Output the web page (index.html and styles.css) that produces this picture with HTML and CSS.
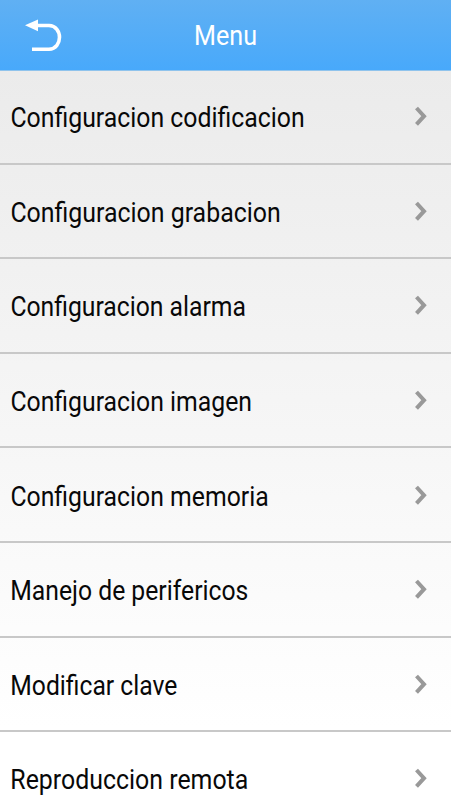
FILE: index.html
```html
<!DOCTYPE html>
<html lang="es">
<head>
<meta charset="utf-8">
<title>Menu</title>
<link rel="stylesheet" href="styles.css">
</head>
<body>
<header class="bar">
<svg class="back" width="40" height="36" viewBox="0 0 40 36"><path d="M12 8.5H25C39 9 39 31.500 25 32.200H8" fill="none" stroke="#fff" stroke-width="3.600"/><path d="M1 8.300L14 2.500V14.200Z" fill="#fff"/></svg>
<h1 class="title"><svg class="label" width="66" height="40"><text x="1" y="30" textLength="63" lengthAdjust="spacingAndGlyphs">Menu</text></svg></h1>
</header>
<main class="list">
<a class="row"><svg class="label" width="380" height="44"><text x="0.4" y="33" textLength="294.300" lengthAdjust="spacingAndGlyphs">Configuracion codificacion</text></svg><svg class="chev" width="14" height="20" viewBox="0 0 14 20"><path d="M2.500 2L10 10.200L2.500 18.400"/></svg></a>
<a class="row"><svg class="label" width="380" height="44"><text x="0.4" y="33" textLength="270.300" lengthAdjust="spacingAndGlyphs">Configuracion grabacion</text></svg><svg class="chev" width="14" height="20" viewBox="0 0 14 20"><path d="M2.500 2L10 10.200L2.500 18.400"/></svg></a>
<a class="row"><svg class="label" width="380" height="44"><text x="0.4" y="33" textLength="235.600" lengthAdjust="spacingAndGlyphs">Configuracion alarma</text></svg><svg class="chev" width="14" height="20" viewBox="0 0 14 20"><path d="M2.500 2L10 10.200L2.500 18.400"/></svg></a>
<a class="row"><svg class="label" width="380" height="44"><text x="0.4" y="33" textLength="241.600" lengthAdjust="spacingAndGlyphs">Configuracion imagen</text></svg><svg class="chev" width="14" height="20" viewBox="0 0 14 20"><path d="M2.500 2L10 10.200L2.500 18.400"/></svg></a>
<a class="row"><svg class="label" width="380" height="44"><text x="0.4" y="33" textLength="258.300" lengthAdjust="spacingAndGlyphs">Configuracion memoria</text></svg><svg class="chev" width="14" height="20" viewBox="0 0 14 20"><path d="M2.500 2L10 10.200L2.500 18.400"/></svg></a>
<a class="row"><svg class="label" width="380" height="44"><text x="0.3" y="33" textLength="238" lengthAdjust="spacingAndGlyphs">Manejo de perifericos</text></svg><svg class="chev" width="14" height="20" viewBox="0 0 14 20"><path d="M2.500 2L10 10.200L2.500 18.400"/></svg></a>
<a class="row"><svg class="label" width="380" height="44"><text x="0.3" y="33" textLength="167" lengthAdjust="spacingAndGlyphs">Modificar clave</text></svg><svg class="chev" width="14" height="20" viewBox="0 0 14 20"><path d="M2.500 2L10 10.200L2.500 18.400"/></svg></a>
<a class="row"><svg class="label" width="380" height="44"><text x="0.3" y="33" textLength="238" lengthAdjust="spacingAndGlyphs">Reproduccion remota</text></svg><svg class="chev" width="14" height="20" viewBox="0 0 14 20"><path d="M2.500 2L10 10.200L2.500 18.400"/></svg></a>
</main>
</body>
</html>
```
FILE: styles.css
```css
* { box-sizing: border-box; }
body { margin: 0; height: 800px; overflow: hidden; font-family: Roboto, "Liberation Sans", sans-serif; }
.bar { height: 70px; display: grid; grid-template-columns: 1fr auto 1fr; align-items: center; background: linear-gradient(#60b0f3, #48a9fb); }
.back { margin-left: 24px; }
.title { margin: 0; font-weight: 400; line-height: 0; }
.label { overflow: visible; }
.title text { fill: #fff; font-size: 28px; }
.list { height: 730px; overflow: hidden; border-top: 1px solid #8fc3ec; background: linear-gradient(#ebebeb, #fff 90%); }
.row { height: 94.6px; padding: 0 23px 0 10px; display: flex; align-items: center; justify-content: space-between; border-bottom: 2px solid #c8c8c8; }
.row:first-child { height: 93.6px; padding-bottom: 1px; }
.row text { fill: #080808; font-size: 28px; }
.chev { fill: none; stroke: #999; stroke-width: 4; }
```
